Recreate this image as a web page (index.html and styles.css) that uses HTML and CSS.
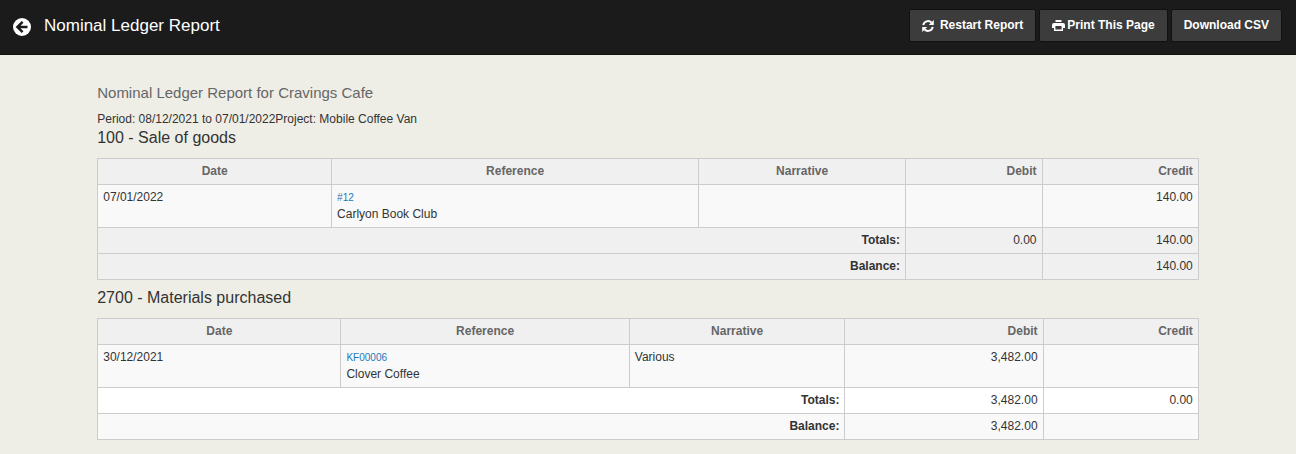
FILE: index.html
```html
<!DOCTYPE html>
<html lang="en">
<head>
<meta charset="utf-8">
<title>Nominal Ledger Report</title>
<link rel="stylesheet" href="styles.css">
</head>
<body>
<header class="topbar">
  <a class="back" href="#" aria-label="Back">
    <svg viewBox="0 0 18 18" width="18" height="18"><circle cx="9" cy="9" r="9" fill="#fff"/><path d="M9.6 3.8 4.4 9l5.2 5.2M5 9h9.500" fill="none" stroke="#1b1b1b" stroke-width="2.500"/></svg>
  </a>
  <h1 class="title">Nominal Ledger Report</h1>
  <div class="actions">
    <button class="btn btn-restart" type="button">
      <svg viewBox="0 0 12 12" width="12" height="12"><path d="M1.3 5.2A4.8 4.8 0 0 1 9.4 2.5M10.7 6.8A4.8 4.8 0 0 1 2.6 9.5" fill="none" stroke="#fff" stroke-width="2"/><path d="M11.8 0v5H6.8zM.2 12V7h5z" fill="#fff"/></svg>
      Restart Report</button>
    <button class="btn btn-print" type="button">
      <svg viewBox="0 0 13 11" width="13" height="11"><path d="M3.500 2V0h6v2zM2 3h9Q13 3 13 5v3h-2V6H2v2H0V5Q0 3 2 3z" fill="#fff"/><path d="M2.700 6v4.200h7.600V6" fill="none" stroke="#fff" stroke-width="1.400"/></svg>
      Print This Page</button>
    <button class="btn" type="button">Download CSV</button>
  </div>
</header>
<main class="report">
  <h2 class="report-title">Nominal Ledger Report for Cravings Cafe</h2>
  <p class="period">Period: 08/12/2021 to 07/01/2022Project: Mobile Coffee Van</p>

  <h3 class="account" id="acc-100">100 - Sale of goods</h3>
  <table class="ledger shaded" aria-labelledby="acc-100">
    <colgroup><col class="s-date"><col class="s-ref"><col class="s-narr"><col class="s-debit"><col></colgroup>
    <thead><tr><th>Date</th><th>Reference</th><th>Narrative</th><th class="num">Debit</th><th class="num">Credit</th></tr></thead>
    <tbody>
      <tr><td>07/01/2022</td><td><a class="ref" href="#">#12</a><br>Carlyon Book Club</td><td></td><td></td><td class="num">140.00</td></tr>
      <tr class="sum"><th class="num" colspan="3" scope="row">Totals:</th><td class="num">0.00</td><td class="num">140.00</td></tr>
      <tr class="sum"><th class="num" colspan="3" scope="row">Balance:</th><td></td><td class="num">140.00</td></tr>
    </tbody>
  </table>

  <h3 class="account" id="acc-2700">2700 - Materials purchased</h3>
  <table class="ledger" aria-labelledby="acc-2700">
    <colgroup><col class="m-date"><col class="m-ref"><col class="m-narr"><col class="m-debit"><col></colgroup>
    <thead><tr><th>Date</th><th>Reference</th><th>Narrative</th><th class="num">Debit</th><th class="num">Credit</th></tr></thead>
    <tbody>
      <tr><td>30/12/2021</td><td><a class="ref" href="#">KF00006</a><br>Clover Coffee</td><td>Various</td><td class="num">3,482.00</td><td></td></tr>
      <tr class="sum"><th class="num" colspan="3" scope="row">Totals:</th><td class="num">3,482.00</td><td class="num">0.00</td></tr>
      <tr class="sum"><th class="num" colspan="3" scope="row">Balance:</th><td class="num">3,482.00</td><td></td></tr>
    </tbody>
  </table>
</main>
</body>
</html>
```
FILE: styles.css
```css
* { box-sizing: border-box; }
body {
  margin: 0;
  background: #eeeee6;
  color: #333;
  font: 12px/17px "Liberation Sans", Arial, sans-serif;
}
.topbar {
  display: flex;
  align-items: center;
  padding: 9px 14px 12px 13px;
  background: #1b1b1b;
  border-bottom: 1px solid #111;
}
.back { display: block; height: 18px; margin-top: 2px; }
.back svg { display: block; }
.title {
  margin: 1px auto 0 13px;
  font-size: 17px;
  line-height: 20px;
  font-weight: 400;
  color: #fff;
}
.actions { display: flex; gap: 3px; }
.btn {
  display: flex;
  align-items: center;
  gap: 2px;
  padding: 7px 12px;
  border: 1px solid #111;
  border-radius: 2px;
  background: #3c3c3c;
  color: #fff;
  font: bold 12px/17px "Liberation Sans", Arial, sans-serif;
}
.btn-restart { gap: 6px; }
.report { width: 85%; margin: 0 auto; padding: 28px 0 16px; }
.report-title {
  margin: 0 0 8px;
  font-size: 15px;
  line-height: 20px;
  font-weight: 400;
  color: #666;
}
.period { margin: 0; font-size: 12px; line-height: 17px; }
.account {
  margin: 0 0 10px;
  font-size: 16px;
  line-height: 20px;
  font-weight: 400;
}
.ledger {
  width: 100%;
  margin: 0 0 8px;
  table-layout: fixed;
  border-collapse: collapse;
}
.ledger th, .ledger td {
  padding: 4px 5px;
  border: 1px solid #ccc;
  text-align: left;
  vertical-align: top;
}
.ledger thead th { background: #f0f0f0; color: #666; text-align: center; }
.ledger .num, .ledger thead .num { text-align: right; }
.ledger tbody tr { background: #f9f9f9; }
.ledger tbody tr:nth-child(2) { background: #fff; }
.ledger.shaded tbody .sum { background: #f0f0f0; }
.ref { color: #1c78bd; font-size: 10px; text-decoration: none; }
.s-date { width: 21.25%; }
.s-ref { width: 33.35%; }
.s-narr { width: 18.8%; }
.s-debit { width: 12.4%; }
.m-date { width: 22.1%; }
.m-ref { width: 26.2%; }
.m-narr { width: 19.6%; }
.m-debit { width: 18%; }
```
